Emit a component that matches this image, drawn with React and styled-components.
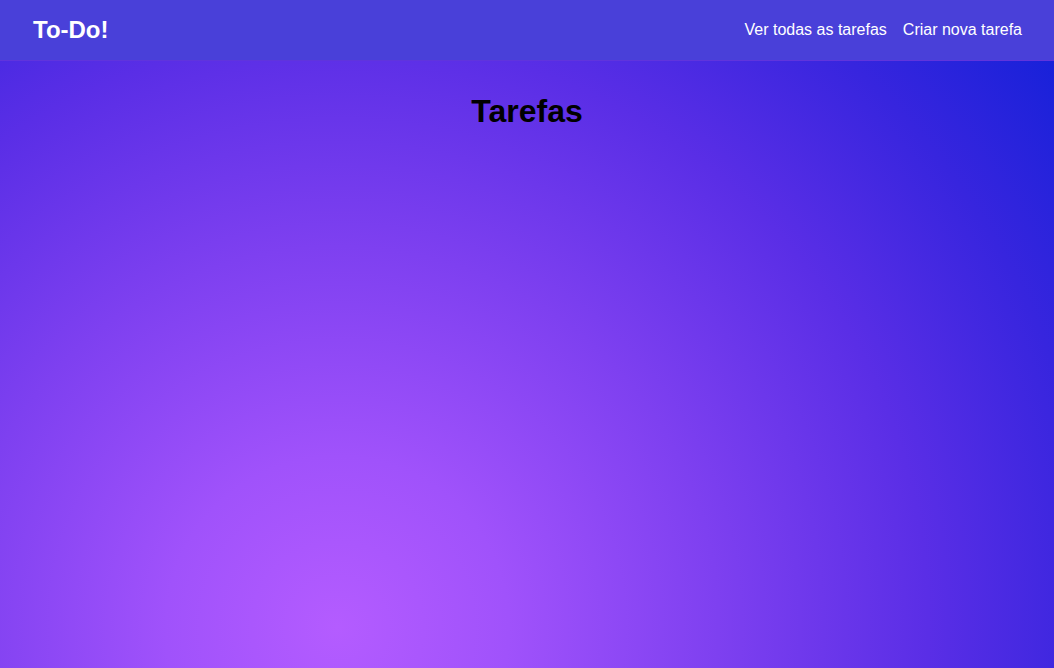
import React from "react";
import styled, { createGlobalStyle } from "styled-components";

const Global = createGlobalStyle`
  * { box-sizing: border-box; }
  html, body { margin: 0; padding: 0; }
  body { font-family: "Liberation Sans", Arial, sans-serif; }
`;

const Page = styled.div`
  min-height: 100vh;
  display: flex;
  flex-direction: column;
  background: radial-gradient(
    circle at 32% 94%,
    #b45cff 0%,
    #a052fb 18%,
    #7e40f0 40%,
    #5a2ee6 62%,
    #3725de 80%,
    #1020d8 100%
  );
`;

const Header = styled.header`
  height: 61px;
  display: flex;
  align-items: center;
  justify-content: space-between;
  padding: 0 32px 0 33px;
  background: #4940d9;
  border-bottom: 1px solid #6034dc;
`;

const Logo = styled.a`
  color: #fff;
  font-weight: 700;
  font-size: 24px;
  text-decoration: none;
`;

const Nav = styled.nav`
  display: flex;
  gap: 16px;
`;

const NavLink = styled.a`
  color: #fff;
  font-size: 16px;
  text-decoration: none;
`;

const Main = styled.main`
  flex: 1;
  display: flex;
  flex-direction: column;
  align-items: center;
  padding-top: 32px;
`;

const Title = styled.h1`
  margin: 0;
  font-size: 32px;
  font-weight: 700;
  color: #000;
`;

export default function App() {
  return (
    <>
      <Global />
      <Page>
        <Header>
          <Logo href="#">To-Do!</Logo>
          <Nav>
            <NavLink href="#">Ver todas as tarefas</NavLink>
            <NavLink href="#">Criar nova tarefa</NavLink>
          </Nav>
        </Header>
        <Main>
          <Title>Tarefas</Title>
        </Main>
      </Page>
    </>
  );
}
